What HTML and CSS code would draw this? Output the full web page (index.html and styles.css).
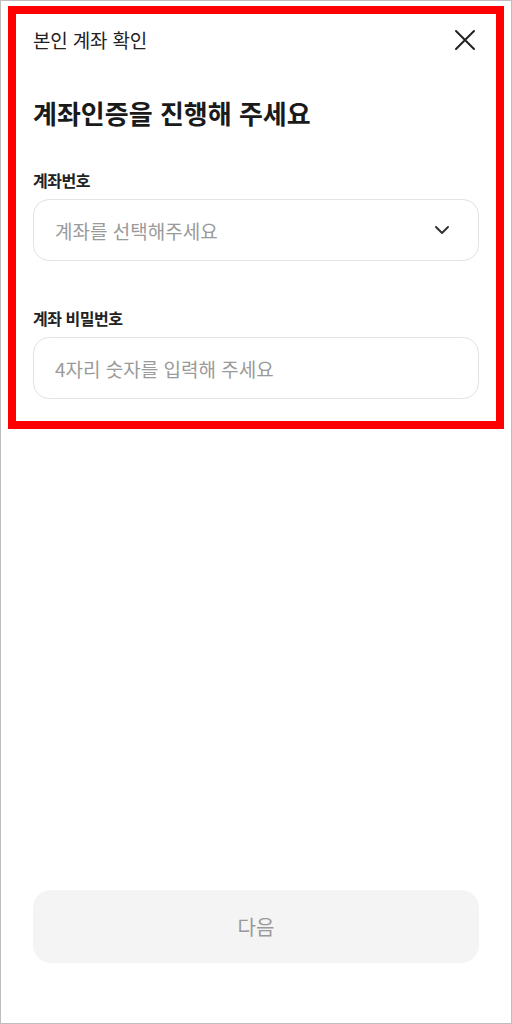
FILE: index.html
```html
<!DOCTYPE html>
<html lang="ko">
<head>
<meta charset="utf-8">
<title>본인 계좌 확인</title>
<link rel="stylesheet" href="styles.css">
</head>
<body>
<div class="frame">
  <div class="page">
    <header class="header">
      <span class="header-title">본인 계좌 확인</span>
      <button class="close" aria-label="닫기">
        <svg width="22" height="22" viewBox="0 0 22 22" fill="none" stroke="#222" stroke-width="2" stroke-linecap="round">
          <path d="M2 2 L20 20 M20 2 L2 20"/>
        </svg>
      </button>
    </header>
    <h1 class="title">계좌인증을 진행해 주세요</h1>
    <div class="field">
      <label class="label">계좌번호</label>
      <div class="box select">
        <span class="placeholder">계좌를 선택해주세요</span>
        <svg class="chev" width="16" height="10" viewBox="0 0 16 10" fill="none" stroke="#333" stroke-width="2" stroke-linecap="round" stroke-linejoin="round">
          <path d="M2 2 L8 8 L14 2"/>
        </svg>
      </div>
    </div>
    <div class="field second">
      <label class="label">계좌 비밀번호</label>
      <div class="box">
        <span class="placeholder">4자리 숫자를 입력해 주세요</span>
      </div>
    </div>
    <div class="spacer"></div>
    <button class="next">다음</button>
  </div>
  <div class="highlight"></div>
</div>
</body>
</html>
```

FILE: styles.css
```css
* { box-sizing: border-box; }
html, body { margin: 0; padding: 0; background: #fff; }
body {
  font-family: "Noto Sans CJK KR", "Noto Sans", sans-serif;
  color: #222;
}
.frame {
  position: relative;
  width: 512px;
  height: 1024px;
  border: 1px solid #bdbdbd;
  background: #fff;
}
.page {
  display: flex;
  flex-direction: column;
  height: 100%;
  padding: 0 32px 60px;
}
.header {
  height: 78px;
  display: flex;
  align-items: center;
  justify-content: space-between;
}
.header-title {
  font-size: 19px;
  line-height: 26px;
  color: #222;
  letter-spacing: -0.01em;
}
.close {
  border: 0;
  background: none;
  padding: 0;
  margin-right: 3px;
  width: 22px;
  height: 22px;
  display: flex;
}
.title {
  margin: 17px 0 0;
  font-size: 26px;
  line-height: 34px;
  font-weight: 700;
  color: #1a1a1a;
}
.field { margin-top: 39px; }
.field.second { margin-top: 46px; }
.label {
  display: block;
  font-size: 16px;
  line-height: 22px;
  font-weight: 700;
  color: #222;
  letter-spacing: -0.03em;
  margin-bottom: 8px;
}
.box {
  height: 62px;
  border: 1px solid #e3e3e3;
  border-radius: 16px;
  padding: 0 28px 0 21px;
  display: flex;
  align-items: center;
  justify-content: space-between;
}
.placeholder {
  font-size: 19px;
  color: #9a9a9a;
}
.chev { display: block; }
.spacer { flex: 1; }
.next {
  height: 73px;
  border: 0;
  border-radius: 18px;
  background: #f4f4f4;
  color: #999;
  font-family: inherit;
  font-size: 20px;
  width: 100%;
}
.highlight {
  position: absolute;
  left: 7px;
  top: 5px;
  width: 496px;
  height: 423px;
  border: 8px solid #ff0000;
  pointer-events: none;
}
```
